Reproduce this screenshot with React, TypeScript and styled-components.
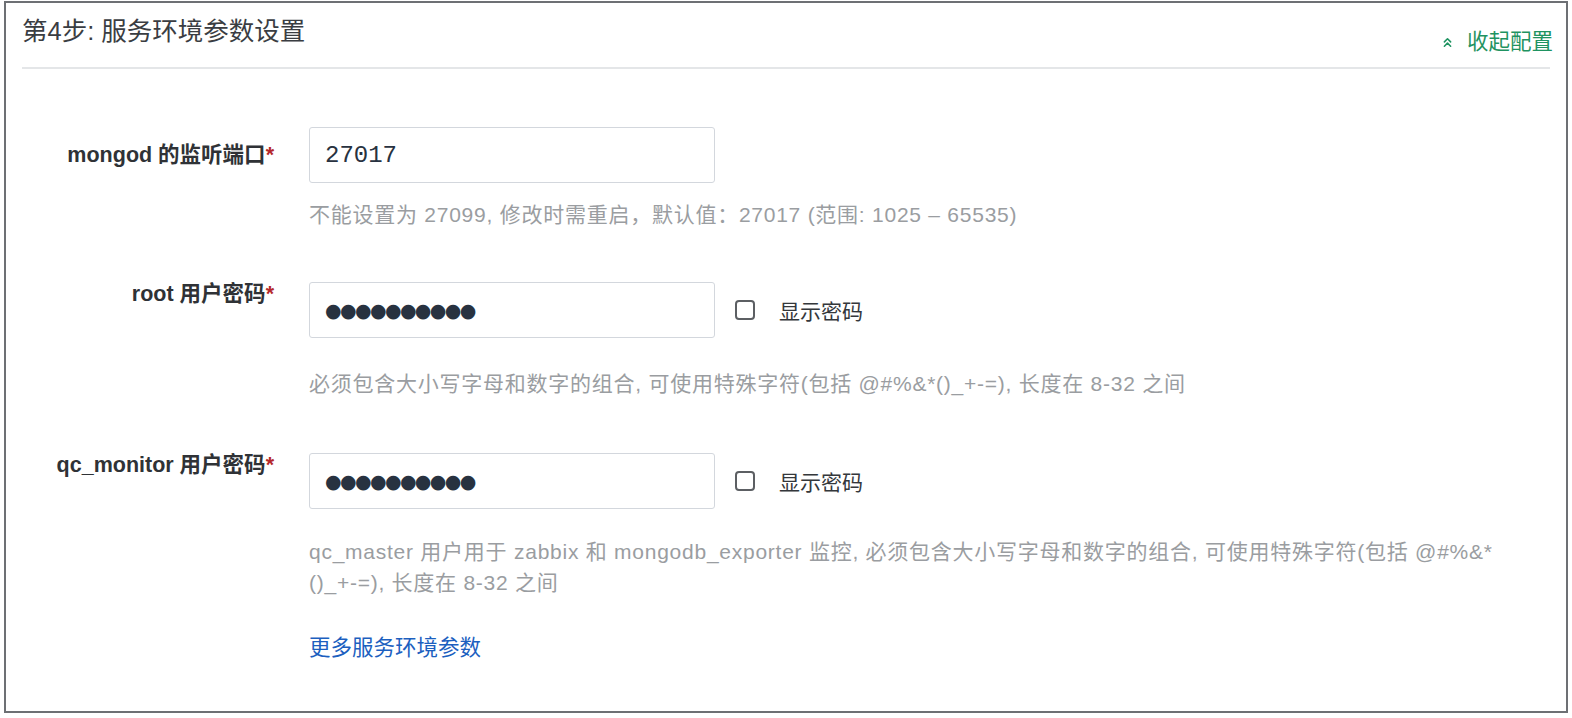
import { ChevronsUp } from 'lucide-react';
import styled, { createGlobalStyle } from 'styled-components';

const GlobalStyle = createGlobalStyle`
  html, body {
    margin: 0;
    padding: 0;
    background: #fff;
  }
  body {
    font-family: 'Liberation Sans', 'Noto Sans CJK SC', sans-serif;
    color: #333;
  }
`;

const Page = styled.div`
  padding: 1px 4px 4px 4px;
`;

const Panel = styled.section`
  border: 2px solid #6d7074;
  height: 712px;
  box-sizing: border-box;
  padding: 0 16px;
`;

const Header = styled.header`
  display: flex;
  justify-content: space-between;
  height: 64px;
  border-bottom: 2px solid #e4e6e8;
`;

const Title = styled.h2`
  margin: 0;
  padding-top: 13px;
  font-size: 25.5px;
  line-height: 30px;
  font-weight: normal;
  color: #3a3d42;
`;

const Collapse = styled.a`
  align-self: flex-end;
  display: flex;
  align-items: center;
  gap: 12px;
  padding-bottom: 12px;
  margin-right: -3px;
  font-size: 21.5px;
  line-height: 26px;
  color: #1f9361;
  cursor: pointer;
`;

const Form = styled.div`
  padding-top: 58px;
`;

const Row = styled.div<{ $gap: number }>`
  display: grid;
  grid-template-columns: 252px 1fr;
  column-gap: 35px;
  margin-top: ${(p) => p.$gap}px;
`;

const Label = styled.label<{ $offset: number }>`
  text-align: right;
  font-size: 21.5px;
  line-height: 24px;
  font-weight: bold;
  color: #2f3236;
  padding-top: ${(p) => p.$offset}px;

  em {
    font-style: normal;
    color: #b5292b;
  }
`;

const Field = styled.div`
  display: flex;
  flex-direction: column;
`;

const Control = styled.div`
  display: flex;
  align-items: center;
`;

const TextInput = styled.input<{ $dots?: boolean }>`
  box-sizing: border-box;
  width: 406px;
  height: 56px;
  border: 1px solid #d3d7dd;
  border-radius: 3px;
  padding: 0 15px;
  outline: none;
  color: #283240;
  background: #fff;
  font-family: ${(p) => (p.$dots ? "'DejaVu Sans', sans-serif" : "'Liberation Mono', monospace")};
  font-size: ${(p) => (p.$dots ? '19px' : '24px')};
  letter-spacing: ${(p) => (p.$dots ? '-1.6px' : '0')};
`;

const Check = styled.label`
  display: flex;
  align-items: center;
  gap: 24px;
  margin-left: 20px;
  font-size: 21px;
  color: #34373b;
`;

const Box = styled.span`
  box-sizing: border-box;
  width: 20px;
  height: 20px;
  border: 2px solid #5c5f63;
  border-radius: 4px;
`;

const Help = styled.p<{ $gap: number }>`
  margin: ${(p) => p.$gap}px 0 0 0;
  max-width: 1190px;
  font-size: 21px;
  letter-spacing: 0.75px;
  line-height: 31px;
  color: #9a9da1;
`;

const MoreLink = styled.a`
  display: block;
  margin: 35px 0 0 287px;
  font-size: 21.5px;
  line-height: 30px;
  color: #1c5fbf;
  cursor: pointer;
`;

const App = () => {
  return (
    <Page>
      <GlobalStyle />
      <Panel>
        <Header>
          <Title>第4步: 服务环境参数设置</Title>
          <Collapse>
            <ChevronsUp size={15} strokeWidth={2.5} />
            收起配置
          </Collapse>
        </Header>

        <Form>
          <Row $gap={0}>
            <Label $offset={16}>
              mongod 的监听端口<em>*</em>
            </Label>
            <Field>
              <Control>
                <TextInput value="27017" readOnly />
              </Control>
              <Help $gap={16}>不能设置为 27099, 修改时需重启，默认值：27017 (范围: 1025 – 65535)</Help>
            </Field>
          </Row>

          <Row $gap={52}>
            <Label $offset={0}>
              root 用户密码<em>*</em>
            </Label>
            <Field>
              <Control>
                <TextInput $dots value={'●'.repeat(10)} readOnly />
                <Check>
                  <Box />
                  显示密码
                </Check>
              </Control>
              <Help $gap={30}>必须包含大小写字母和数字的组合, 可使用特殊字符(包括 @#%&amp;*()_+-=), 长度在 8-32 之间</Help>
            </Field>
          </Row>

          <Row $gap={54}>
            <Label $offset={0}>
              qc_monitor 用户密码<em>*</em>
            </Label>
            <Field>
              <Control>
                <TextInput $dots value={'●'.repeat(10)} readOnly />
                <Check>
                  <Box />
                  显示密码
                </Check>
              </Control>
              <Help $gap={27}>
                qc_master 用户用于 zabbix 和 mongodb_exporter 监控, 必须包含大小写字母和数字的组合, 可使用特殊字符(包括 @#%&amp;*
                <wbr />
                ()_+-=), 长度在 8-32 之间
              </Help>
            </Field>
          </Row>
        </Form>

        <MoreLink>更多服务环境参数</MoreLink>
      </Panel>
    </Page>
  );
};

export default App;
